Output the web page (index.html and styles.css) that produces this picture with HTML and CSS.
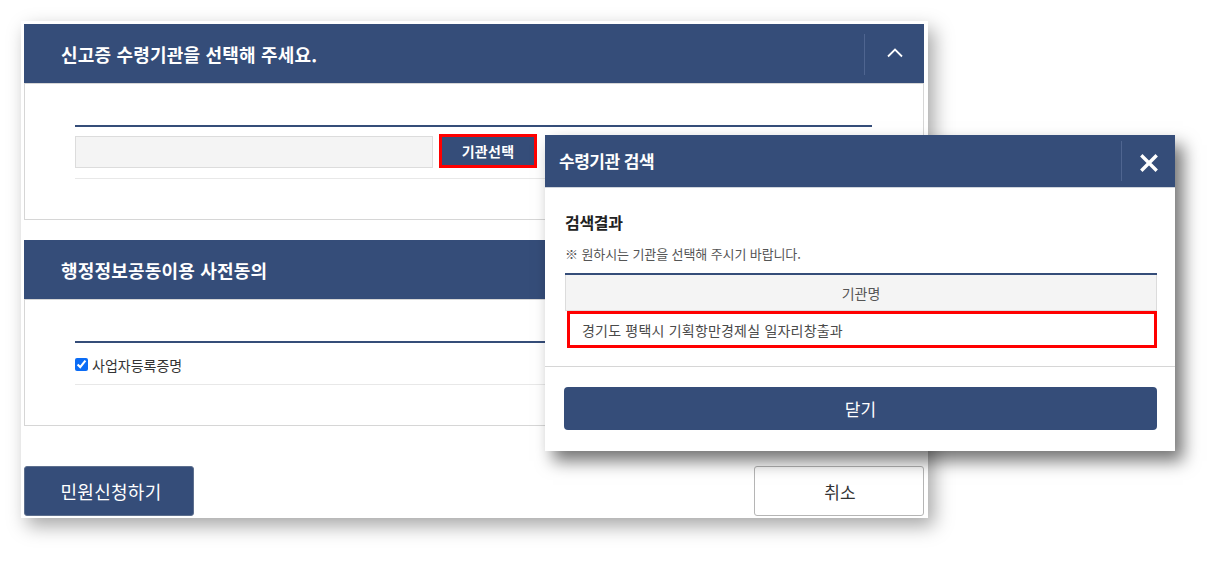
FILE: index.html
```html
<!DOCTYPE html>
<html lang="ko">
<head>
<meta charset="utf-8">
<title>신고증 수령기관</title>
<link rel="stylesheet" href="styles.css">
</head>
<body>
<div class="page">
  <div class="card">
    <section class="box box-first">
      <div class="box-head">
        <h2 class="box-title">신고증 수령기관을 선택해 주세요.</h2>
        <div class="head-tool">
          <svg class="chev" width="16" height="10" viewBox="0 0 16 10"><path d="M1 8.5 L8 1.5 L15 8.5" fill="none" stroke="#fff" stroke-width="1.8"/></svg>
        </div>
      </div>
      <div class="box-body">
        <div class="form-row">
          <div class="fake-input"></div>
          <div class="btn-select-wrap"><button class="btn-select">기관선택</button></div>
        </div>
      </div>
    </section>
    <section class="box box-second">
      <div class="box-head">
        <h2 class="box-title">행정정보공동이용 사전동의</h2>
      </div>
      <div class="box-body">
        <div class="check-row">
          <label class="check"><input type="checkbox" checked><span>사업자등록증명</span></label>
        </div>
      </div>
    </section>
    <div class="actions">
      <button class="btn-primary">민원신청하기</button>
      <button class="btn-cancel">취소</button>
    </div>
  </div>

  <div class="modal">
    <div class="modal-head">
      <h3 class="modal-title">수령기관 검색</h3>
      <div class="modal-close">
        <svg width="18" height="18" viewBox="0 0 18 18"><path d="M2.5 2.5 L15.5 15.5 M15.5 2.5 L2.5 15.5" stroke="#fff" stroke-width="3.4" stroke-linecap="square"/></svg>
      </div>
    </div>
    <div class="modal-body">
      <h4 class="result-title">검색결과</h4>
      <p class="notice">※ 원하시는 기관을 선택해 주시기 바랍니다.</p>
      <div class="table">
        <div class="th">기관명</div>
        <div class="td-wrap"><div class="td">경기도 평택시 기획항만경제실 일자리창출과</div></div>
      </div>
    </div>
    <div class="modal-foot">
      <button class="btn-close">닫기</button>
    </div>
  </div>
</div>
</body>
</html>
```

FILE: styles.css
```css
* { box-sizing: border-box; }
html, body { margin: 0; padding: 0; background: #fff; }
body {
  font-family: "Noto Sans CJK KR", "Noto Sans", "Liberation Sans", sans-serif;
  color: #333;
}
button { font-family: inherit; cursor: pointer; }

.page {
  position: relative;
  width: 1217px;
  height: 561px;
  padding: 21px 0 0 21px;
}

.card {
  width: 907px;
  height: 497px;
  background: #fff;
  padding: 3px;
  box-shadow: 6px 8px 18px rgba(0, 0, 0, 0.35);
}

.box {
  width: 900px;
  border: 1px solid #d6d6d6;
  border-top: none;
  background: #fff;
}
.box-second { margin-top: 20px; }

.box-head {
  height: 60px;
  margin: 0 -1px;
  background: #354d79;
  border-bottom: 1px solid #d6d6d6;
  display: flex;
  align-items: center;
  justify-content: space-between;
  padding-left: 37px;
}
.box-title {
  margin: 0;
  color: #fff;
  font-size: 18px;
  font-weight: 700;
  line-height: 24px;
  letter-spacing: 0.2px;
}
.head-tool {
  height: 41px;
  width: 60px;
  border-left: 1px solid #4f6590;
  display: flex;
  align-items: center;
  justify-content: center;
  margin-top: 1px;
}
.chev { display: block; margin-top: -2px; }

.box-body {
  padding: 41px 51px 40px 50px;
}

.form-row {
  border-top: 2px solid #354d79;
  border-bottom: 1px solid #e8e8e8;
  padding: 7px 0 10px;
  display: flex;
  align-items: center;
  gap: 6px;
}
.fake-input {
  width: 358px;
  height: 32px;
  margin-top: 2px;
  background: #f4f4f4;
  border: 1px solid #dcdcdc;
}
.btn-select-wrap {
  width: 98px;
  height: 34px;
  border: 3px solid #ff0000;
}
.btn-select {
  width: 100%;
  height: 100%;
  border: none;
  background: #354d79;
  color: #fff;
  font-size: 14px;
  font-weight: 700;
  padding: 0;
  letter-spacing: 0.3px;
}

.check-row {
  border-top: 2px solid #354d79;
  border-bottom: 1px solid #e8e8e8;
  height: 44px;
  display: flex;
  align-items: center;
}
.check {
  display: flex;
  align-items: center;
  font-size: 14px;
  color: #333;
  margin-top: 2px;
}
.check input {
  margin: 0 4px 0 0;
  width: 13px;
  height: 13px;
  accent-color: #0b6cf5;
}

.actions {
  margin-top: 40px;
  display: flex;
  justify-content: space-between;
  width: 900px;
}
.btn-primary {
  width: 170px;
  height: 50px;
  background: #354d79;
  color: #fff;
  border: 1px solid #5d6f8e;
  border-radius: 3px;
  font-size: 18px;
  letter-spacing: 0.3px;
  padding: 0 0 0 4px;
}
.btn-cancel {
  width: 170px;
  height: 50px;
  background: #fff;
  color: #333;
  border: 1px solid #b5b5b5;
  border-radius: 3px;
  font-size: 17px;
  padding: 0 0 0 2px;
}

.modal {
  position: absolute;
  left: 545px;
  top: 135px;
  width: 630px;
  height: 316px;
  background: #fff;
  box-shadow: 8px 10px 16px rgba(0, 0, 0, 0.55);
}
.modal-head {
  height: 53px;
  background: #354d79;
  border-bottom: 1px solid #cfd4dc;
  display: flex;
  align-items: center;
  justify-content: space-between;
  padding-left: 14px;
}
.modal-title {
  margin: 0;
  color: #fff;
  font-size: 17px;
  font-weight: 700;
  letter-spacing: -0.5px;
  line-height: 24px;
}
.modal-close {
  width: 54px;
  height: 40px;
  border-left: 1px solid #4f6590;
  display: flex;
  align-items: center;
  justify-content: center;
}
.modal-close svg { display: block; margin-top: 4px; margin-left: 1px; }

.modal-body {
  padding: 23px 18px 18px 20px;
}
.result-title {
  margin: 0;
  font-size: 16px;
  font-weight: 700;
  color: #222;
  line-height: 22px;
  letter-spacing: -0.3px;
}
.notice {
  margin: 13px 0 0;
  font-size: 13px;
  color: #555;
  line-height: 16px;
  letter-spacing: -0.1px;
}
.table {
  margin-top: 11px;
  border-top: 2px solid #354d79;
}
.th {
  height: 36px;
  background: #f4f4f4;
  border: 1px solid #dcdcdc;
  border-top: none;
  display: flex;
  align-items: center;
  justify-content: center;
  font-size: 14px;
  color: #555;
}
.td-wrap {
  padding: 0 0 0 2px;
}
.td {
  height: 37px;
  border: 3px solid #ff0000;
  display: flex;
  align-items: center;
  padding-left: 12px;
  font-size: 14px;
  color: #4a4a4a;
  letter-spacing: 0.2px;
}

.modal-foot {
  border-top: 1px solid #d6d6d6;
  padding: 20px 18px 0 19px;
}
.btn-close {
  width: 100%;
  height: 43px;
  background: #354d79;
  color: #fff;
  border: none;
  border-radius: 4px;
  font-size: 17px;
  padding: 0;
}
```
